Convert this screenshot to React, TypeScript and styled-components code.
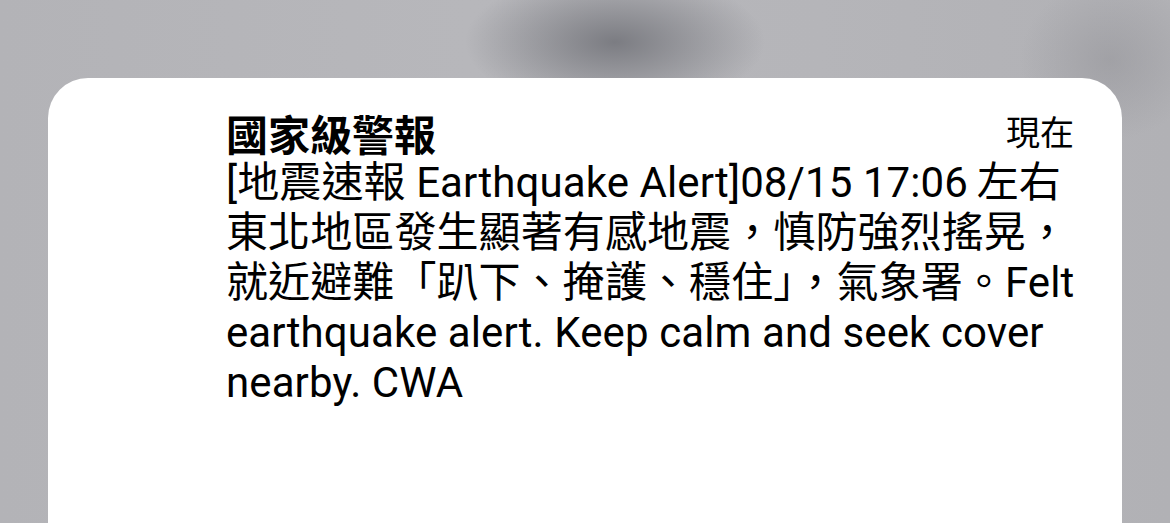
import * as React from "react";
import styled, { createGlobalStyle } from "styled-components";

const GlobalStyle = createGlobalStyle`
	html, body {
		margin: 0;
		padding: 0;
	}
	body {
		background: #b5b5b9;
		font-family: "Roboto", "Noto Sans CJK TC", sans-serif;
		-webkit-font-smoothing: antialiased;
	}
`;

const Backdrop = styled.div`
	height: 523px;
	overflow: hidden;
	box-sizing: border-box;
	padding: 78px 48px 0 48px;
	background:
		radial-gradient(ellipse 150px 70px at 615px 42px, rgba(120, 121, 127, 0.95), rgba(120, 121, 127, 0) 100%),
		radial-gradient(ellipse 90px 80px at 1110px 60px, rgba(150, 150, 155, 0.6), rgba(150, 150, 155, 0) 100%),
		linear-gradient(90deg, #b3b3b7 0%, #b7b7bb 40%, #b5b5b9 70%, #b1b1b5 100%);
`;

const Card = styled.div`
	background: #ffffff;
	border-radius: 40px 40px 0 0;
	height: 100%;
	box-sizing: border-box;
	padding: 30px 48px 0 178px;
	color: #000000;
`;

const Header = styled.div`
	display: flex;
	justify-content: space-between;
	align-items: flex-start;
	height: 50px;
`;

const Title = styled.span`
	font-family: "Noto Sans CJK TC", sans-serif;
	font-weight: 700;
	font-size: 42px;
	line-height: 50px;
`;

const Time = styled.span`
	font-family: "Noto Sans CJK TC", sans-serif;
	font-size: 34px;
	line-height: 46px;
`;

const Body = styled.div`
	font-size: 42px;
	line-height: 50px;
	margin-top: 0;
	letter-spacing: 0.1px;
`;

const Line = styled.div`
	white-space: nowrap;
`;

const lines = [
	"[地震速報 Earthquake Alert]08/15 17:06\u2009左右",
	"東北地區發生顯著有感地震，慎防強烈搖晃，",
	"就近避難「趴下、掩護、穩住」，氣象署。Felt",
	"earthquake alert. Keep calm and seek cover",
	"nearby. CWA",
];

export default function App() {
	return (
		<>
			<GlobalStyle />
			<Backdrop>
				<Card>
					<Header>
						<Title>國家級警報</Title>
						<Time>現在</Time>
					</Header>
					<Body>
						{lines.map((l, i) => (
							<Line key={i}>{l}</Line>
						))}
					</Body>
				</Card>
			</Backdrop>
		</>
	);
}
